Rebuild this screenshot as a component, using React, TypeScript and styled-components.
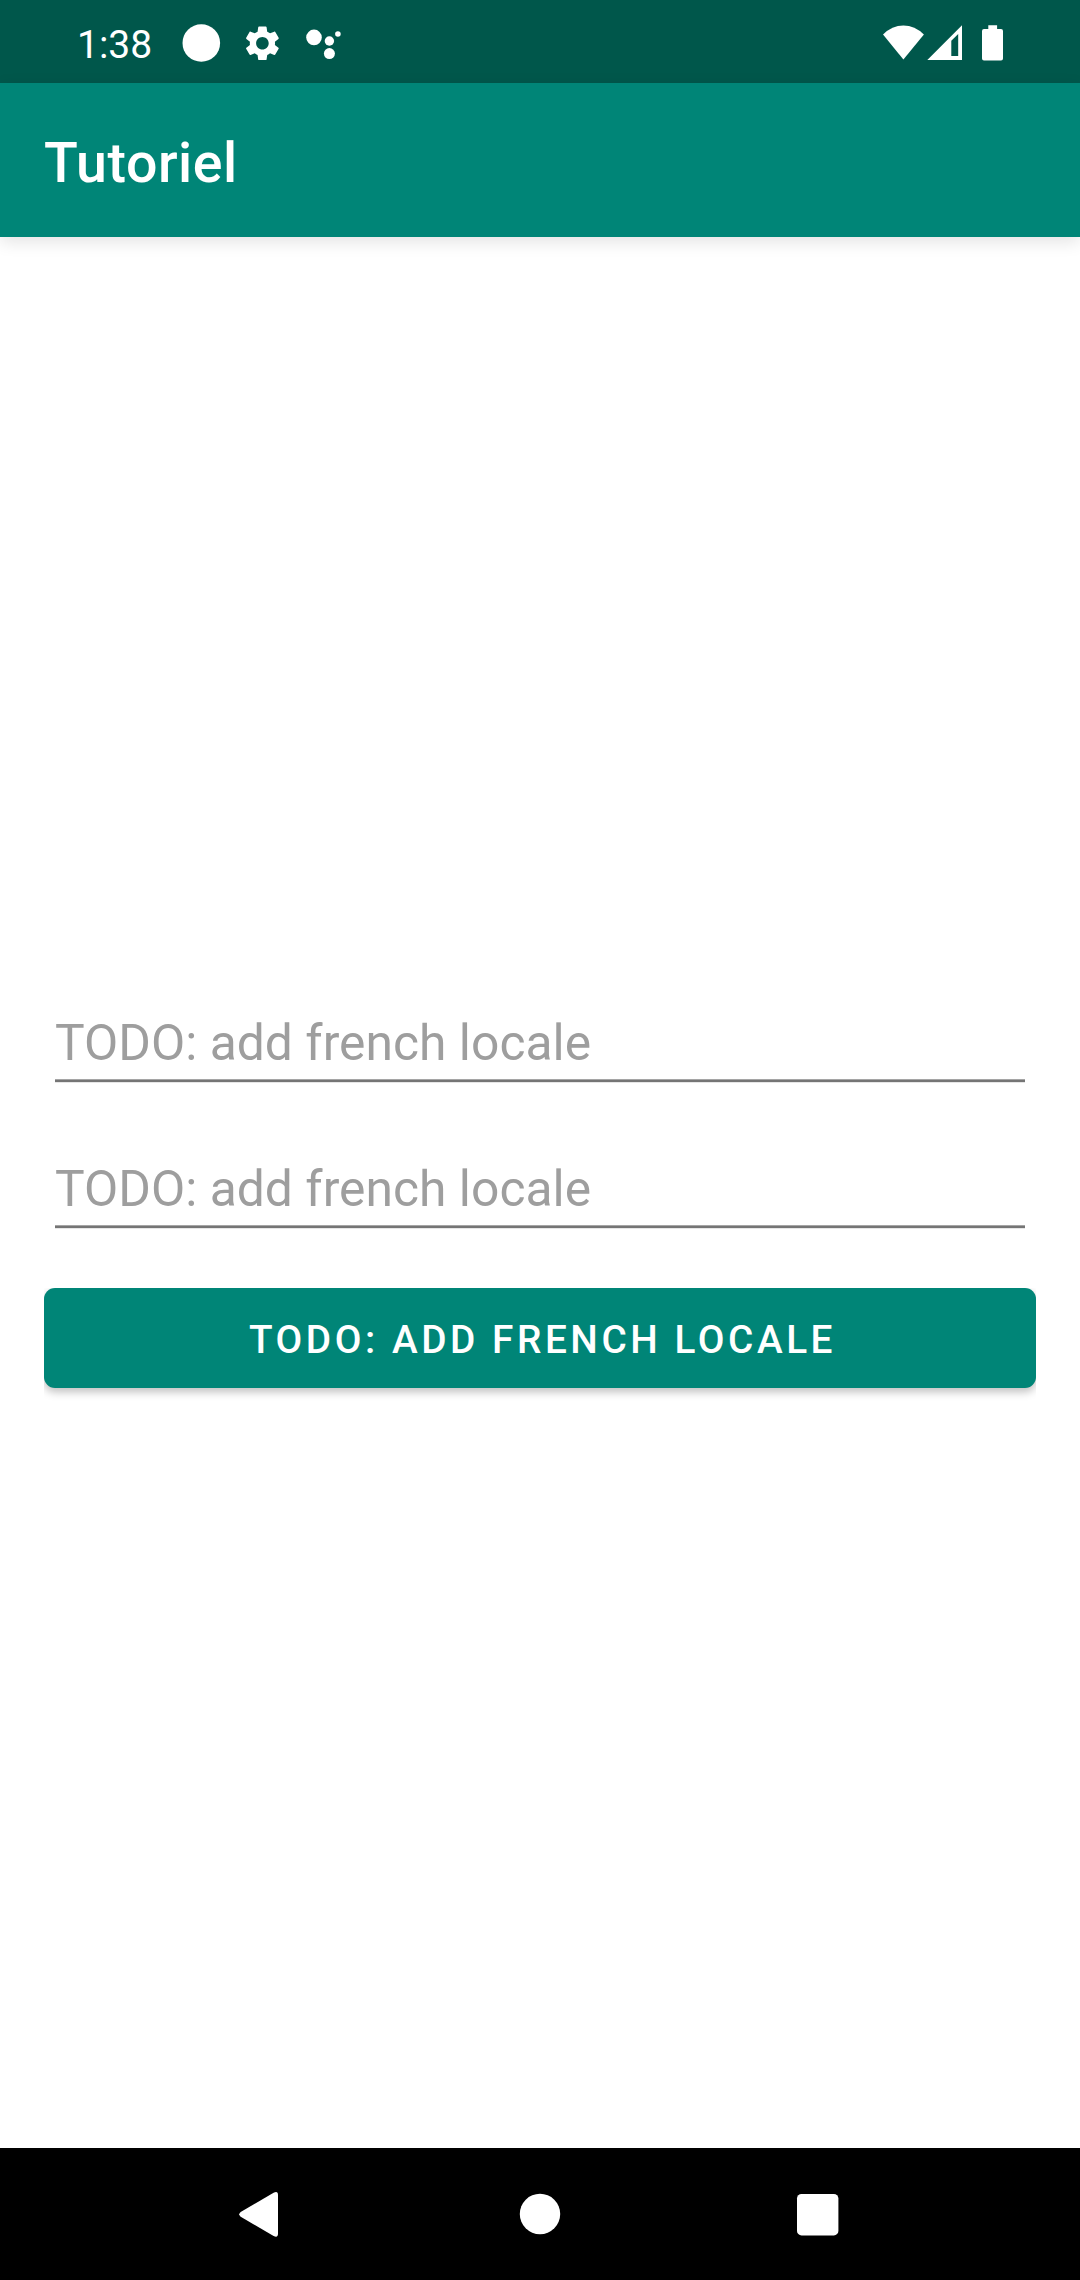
import React from "react";
import styled, { createGlobalStyle } from "styled-components";

const PRIMARY = "#008577";
const PRIMARY_DARK = "#00574b";

const GlobalStyle = createGlobalStyle`
  *, *::before, *::after { box-sizing: border-box; }
  body { margin: 0; background: #fff; font-family: Roboto, "Noto Sans", sans-serif; }
`;

const Screen = styled.div`
  display: flex;
  flex-direction: column;
  width: 1080px;
  height: 2280px;
  overflow: hidden;
  background: #fff;
`;

const StatusBar = styled.header`
  display: flex;
  justify-content: space-between;
  flex: none;
  height: 83px;
  padding: 0 76px;
  background: ${PRIMARY_DARK};
  color: #fff;
`;

const StatusGroup = styled.div`
  display: flex;
  align-items: center;
`;

const Clock = styled.time`
  width: 104px;
  padding: 7px 0 0 1px;
  font-size: 39px;
  line-height: 46px;
`;

const StatusIcon = styled.svg<{ $gap?: number }>`
  display: block;
  flex: none;
  margin-left: ${({ $gap = 0 }) => $gap}px;
  fill: #fff;
`;

const Toolbar = styled.div`
  display: flex;
  align-items: center;
  flex: none;
  height: 154px;
  padding: 8px 44px 0;
  background: ${PRIMARY};
  box-shadow: 0 5px 16px rgba(0, 0, 0, 0.11);
`;

const Title = styled.h1`
  margin: 0;
  color: #fff;
  font-size: 55.5px;
  font-weight: 500;
  line-height: 64px;
  letter-spacing: 0.55px;
`;

const Form = styled.form`
  display: flex;
  flex-direction: column;
  flex: 1;
  padding: 770px 44px 0;
`;

const Field = styled.label`
  display: flex;
  flex-direction: column;
  height: 146px;
  padding: 0 11px;
`;

const Input = styled.input`
  width: 100%;
  height: 72px;
  margin: 0;
  padding: 0;
  border: 0;
  outline: 0;
  background: transparent;
  color: #212121;
  font: 400 49.75px/72px Roboto, sans-serif;
  letter-spacing: 0.03px;

  &::placeholder { color: #9e9e9e; opacity: 1; }
`;

const Underline = styled.span`
  height: 4px;
  background: linear-gradient(#a5a5a5 1px, #757575 1px, #757575 3px, #e6e6e6 3px);
`;

const SubmitArea = styled.div`
  height: 124px;
  margin-top: -11px;
  overflow: hidden;
`;

const Submit = styled.button`
  display: block;
  width: 100%;
  height: 100px;
  margin: 0;
  padding: 3px 0 0 5px;
  border: 0;
  border-radius: 11px;
  background: ${PRIMARY};
  box-shadow: 0 4px 8px rgba(0, 0, 0, 0.25);
  color: #fff;
  font: 500 38.75px/46px Roboto, sans-serif;
  letter-spacing: 3.56px;
  text-transform: uppercase;
`;

const NavBar = styled.nav`
  display: flex;
  justify-content: center;
  align-items: center;
  gap: 146px;
  flex: none;
  height: 132px;
  background: #000;
`;

const NavButton = styled.button`
  display: block;
  width: 132px;
  height: 132px;
  margin: 0;
  padding: 0;
  border: 0;
  background: transparent;

  svg { display: block; fill: #fff; }
`;

const fields = ["first", "second"];
const LABEL = "TODO: add french locale";

export default function App() {
  return (
    <>
      <GlobalStyle />
      <Screen>
        <StatusBar>
          <StatusGroup>
            <Clock>1:38</Clock>
            <StatusIcon width="44" height="83" viewBox="180 0 44 83">
              <circle cx="201.3" cy="43" r="18.8" />
            </StatusIcon>
            <StatusIcon $gap={17} width="42" height="83" viewBox="0 0 42 83">
              <path
                transform="translate(.4 22.3) scale(1.75)"
                d="M19.14 12.94c.04-.3.06-.61.06-.94 0-.32-.02-.64-.07-.94l2.03-1.58c.18-.14.23-.41.12-.61l-1.92-3.32c-.12-.22-.37-.29-.59-.22l-2.39.96c-.5-.38-1.03-.7-1.62-.94L14.4 2.81c-.04-.24-.24-.41-.48-.41h-3.84c-.24 0-.43.17-.47.41l-.36 2.54c-.59.24-1.13.57-1.62.94l-2.39-.96c-.22-.08-.47 0-.59.22L2.74 8.87c-.12.21-.08.47.12.61l2.03 1.58c-.05.3-.09.63-.09.94s.02.64.07.94l-2.03 1.58c-.18.14-.23.41-.12.61l1.92 3.32c.12.22.37.29.59.22l2.39-.96c.5.38 1.03.7 1.62.94l.36 2.54c.05.24.24.41.48.41h3.84c.24 0 .44-.17.47-.41l.36-2.54c.59-.24 1.13-.56 1.62-.94l2.39.96c.22.08.47 0 .59-.22l1.92-3.32c.12-.22.07-.47-.12-.61l-2.01-1.58zM12 15.6c-1.98 0-3.6-1.62-3.6-3.6s1.62-3.6 3.6-3.6 3.6 1.62 3.6 3.6-1.62 3.6-3.6 3.6z"
              />
            </StatusIcon>
            <StatusIcon $gap={17} width="44" height="83" viewBox="300 0 44 83">
              <circle cx="314" cy="37.4" r="7.8" />
              <circle cx="329.4" cy="41" r="4.7" />
              <circle cx="337.9" cy="34" r="2.8" />
              <circle cx="329.4" cy="53.6" r="5.5" />
            </StatusIcon>
          </StatusGroup>
          <StatusGroup>
            <StatusIcon width="42" height="83" viewBox="883 0 42 83">
              <path d="M903.4 59.5 883 34.4Q892 25.4 903.4 25.4T923.9 34.4Z" />
            </StatusIcon>
            <StatusIcon $gap={2} width="36" height="83" viewBox="927 0 36 83">
              <path fillRule="evenodd" d="M927.3 60 962 25.3V60ZM951.3 40.8V56H958.2V33.9Z" />
            </StatusIcon>
            <StatusIcon $gap={19} width="22" height="83" viewBox="982 0 22 83">
              <path d="M988.3 25.3h8.8v3.6h3.9q2 0 2 2v27.7q0 2-2 2h-17q-2 0-2-2V30.9q0-2 2-2h4.3Z" />
            </StatusIcon>
          </StatusGroup>
        </StatusBar>
        <Toolbar>
          <Title>Tutoriel</Title>
        </Toolbar>
        <Form>
          {fields.map((name) => (
            <Field key={name}>
              <Input name={name} placeholder={LABEL} />
              <Underline />
            </Field>
          ))}
          <SubmitArea>
            <Submit type="button">{LABEL}</Submit>
          </SubmitArea>
        </Form>
        <NavBar>
          <NavButton aria-label="Back">
            <svg width="132" height="132" viewBox="196 2148 132 132">
              <path d="M273.6 2192.7Q278 2190.4 278 2195V2233.6Q278 2238.3 273.6 2236L240.7 2216.7Q237.8 2214.4 240.7 2212Z" />
            </svg>
          </NavButton>
          <NavButton aria-label="Home">
            <svg width="132" height="132" viewBox="474 2148 132 132">
              <circle cx="540" cy="2214" r="20.2" />
            </svg>
          </NavButton>
          <NavButton aria-label="Overview">
            <svg width="132" height="132" viewBox="752 2148 132 132">
              <rect x="797" y="2194" width="41.4" height="41.4" rx="4.5" />
            </svg>
          </NavButton>
        </NavBar>
      </Screen>
    </>
  );
}
